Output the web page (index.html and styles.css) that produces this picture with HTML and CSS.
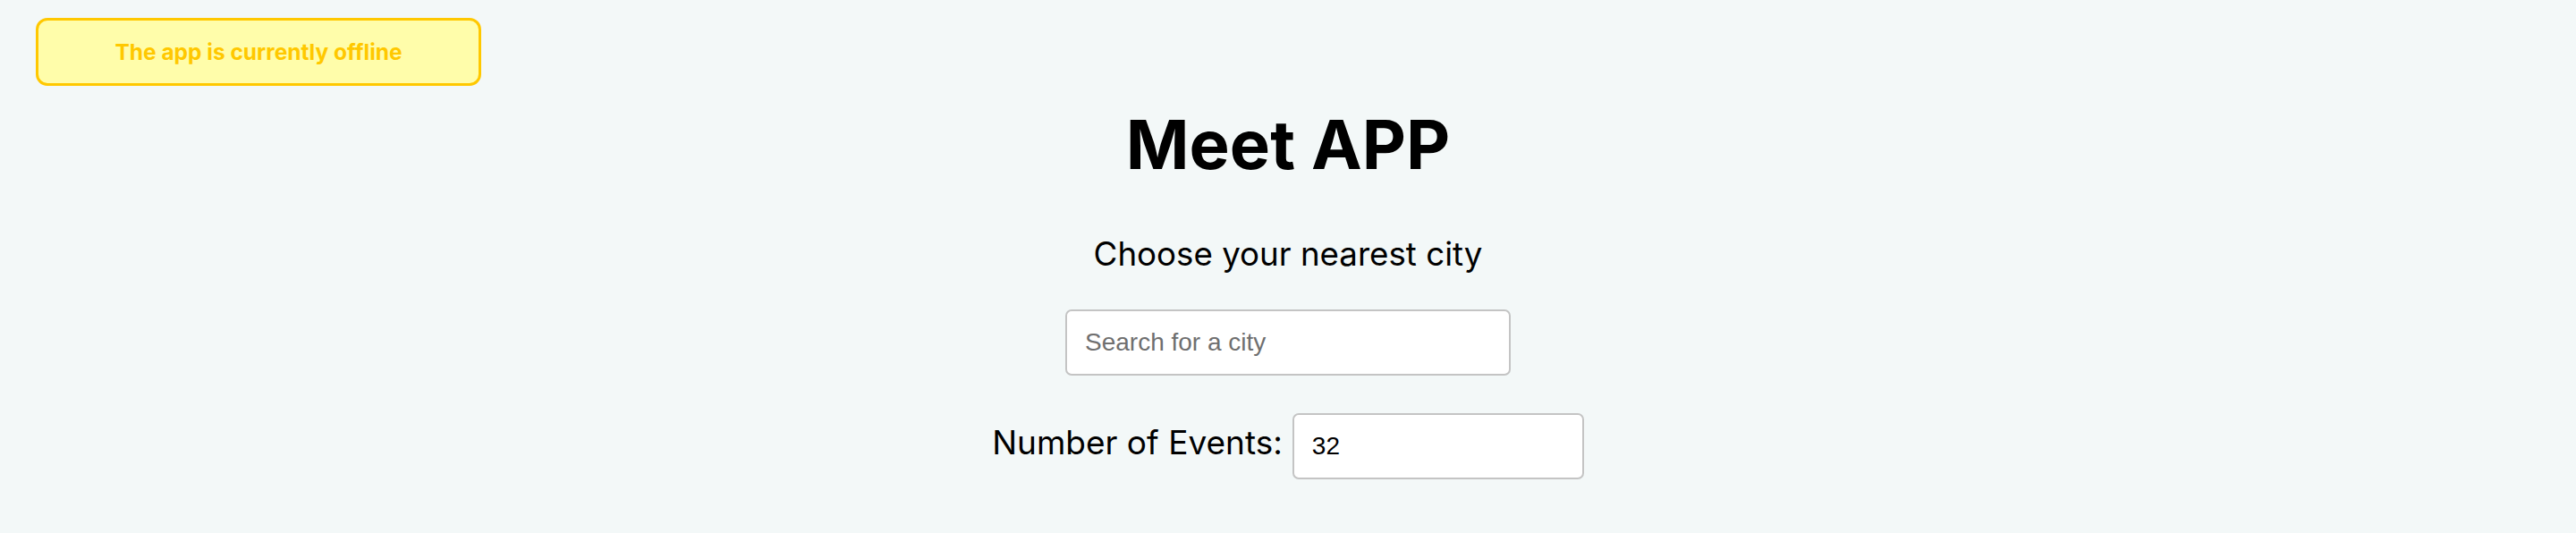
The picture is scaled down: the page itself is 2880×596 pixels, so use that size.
FILE: index.html
```html
<!DOCTYPE html>
<html lang="en">
<head>
<meta charset="utf-8">
<title>Meet App</title>
<link rel="stylesheet" href="styles.css">
</head>
<body>
<div class="app">
  <div class="alerts">
    <div class="offline-alert">The app is currently offline</div>
  </div>
  <h1 class="title">Meet APP</h1>
  <h2 class="subtitle">Choose your nearest city</h2>
  <div class="city-search">
    <input type="text" class="city" placeholder="Search for a city">
  </div>
  <div class="number-of-events">
    <label class="noe-label" for="noe">Number of Events:</label>
    <input type="text" id="noe" class="noe-input" value="32">
  </div>
</div>
</body>
</html>
```

FILE: styles.css
```css
html, body {
  margin: 0;
  padding: 0;
  background: #f3f8f8;
}

.app {
  display: flex;
  flex-direction: column;
  align-items: center;
  font-family: Inter, "Liberation Sans", sans-serif;
  color: #000;
  padding-top: 20px;
}

.alerts {
  align-self: stretch;
  display: flex;
  padding-left: 40px;
}

.offline-alert {
  box-sizing: border-box;
  width: 498px;
  height: 76px;
  display: flex;
  align-items: center;
  justify-content: center;
  background: #fffdaa;
  border: 3px solid #ffc800;
  border-radius: 13px;
  color: #ffc800;
  font-family: Inter, sans-serif;
  font-weight: 700;
  font-size: 24.5px;
}

.title {
  margin: 26px 0 0;
  font-size: 76px;
  line-height: 78px;
  font-weight: 700;
}

.subtitle {
  margin: 65px 0 0;
  font-size: 36.7px;
  line-height: 37px;
  font-weight: 400;
}

.city-search {
  margin-top: 44px;
}

.city, .noe-input {
  box-sizing: border-box;
  height: 74px;
  border: 2px solid #c4c4c4;
  border-radius: 7px;
  background: #fff;
  padding: 0 20px;
  font-family: "Liberation Sans", Arial, sans-serif;
  font-size: 28px;
  color: #000;
  outline: none;
}

.city {
  width: 498px;
}

.city::placeholder {
  color: #6f6f6f;
}

.number-of-events {
  margin-top: 42px;
  display: flex;
  align-items: baseline;
  gap: 11px;
}

.noe-label {
  font-size: 37px;
}

.noe-input {
  width: 326px;
}
```
